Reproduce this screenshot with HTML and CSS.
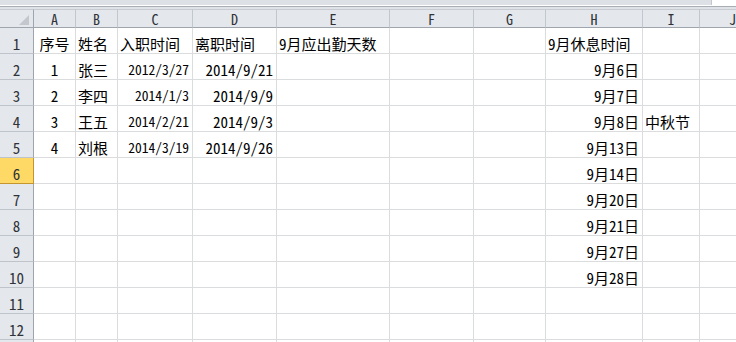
FILE: index.html
```html
<!DOCTYPE html>
<html lang="zh">
<head>
<meta charset="utf-8">
<title>Sheet</title>
<link rel="stylesheet" href="styles.css">
</head>
<body>
<div class="topbar">
  <div class="fbar"><div class="fbar-main"></div><div class="fbar-end"></div></div>
  <div class="fline-w"></div>
  <div class="fline-d"></div>
  <div class="fgap"></div>
</div>
<div class="grid">
  <div class="ch corner"><span class="tri"></span></div>
  <div class="ch">A</div><div class="ch">B</div><div class="ch">C</div><div class="ch">D</div><div class="ch">E</div><div class="ch">F</div><div class="ch">G</div><div class="ch">H</div><div class="ch">I</div><div class="ch">J</div>

  <div class="rh">1</div>
  <div class="c ctr">序号</div><div class="c">姓名</div><div class="c">入职时间</div><div class="c">离职时间</div><div class="c">9月应出勤天数</div><div class="c"></div><div class="c"></div><div class="c">9月休息时间</div><div class="c"></div><div class="c"></div>

  <div class="rh">2</div>
  <div class="c ctr">1</div><div class="c">张三</div><div class="c r sm">2012/3/27</div><div class="c r">2014/9/21</div><div class="c"></div><div class="c"></div><div class="c"></div><div class="c r">9月6日</div><div class="c"></div><div class="c"></div>

  <div class="rh">3</div>
  <div class="c ctr">2</div><div class="c">李四</div><div class="c r sm">2014/1/3</div><div class="c r">2014/9/9</div><div class="c"></div><div class="c"></div><div class="c"></div><div class="c r">9月7日</div><div class="c"></div><div class="c"></div>

  <div class="rh">4</div>
  <div class="c ctr">3</div><div class="c">王五</div><div class="c r sm">2014/2/21</div><div class="c r">2014/9/3</div><div class="c"></div><div class="c"></div><div class="c"></div><div class="c r">9月8日</div><div class="c">中秋节</div><div class="c"></div>

  <div class="rh">5</div>
  <div class="c ctr">4</div><div class="c">刘根</div><div class="c r sm">2014/3/19</div><div class="c r">2014/9/26</div><div class="c"></div><div class="c"></div><div class="c"></div><div class="c r">9月13日</div><div class="c"></div><div class="c"></div>

  <div class="rh sel">6</div>
  <div class="c"></div><div class="c"></div><div class="c"></div><div class="c"></div><div class="c"></div><div class="c"></div><div class="c"></div><div class="c r">9月14日</div><div class="c"></div><div class="c"></div>

  <div class="rh">7</div>
  <div class="c"></div><div class="c"></div><div class="c"></div><div class="c"></div><div class="c"></div><div class="c"></div><div class="c"></div><div class="c r">9月20日</div><div class="c"></div><div class="c"></div>

  <div class="rh">8</div>
  <div class="c"></div><div class="c"></div><div class="c"></div><div class="c"></div><div class="c"></div><div class="c"></div><div class="c"></div><div class="c r">9月21日</div><div class="c"></div><div class="c"></div>

  <div class="rh">9</div>
  <div class="c"></div><div class="c"></div><div class="c"></div><div class="c"></div><div class="c"></div><div class="c"></div><div class="c"></div><div class="c r">9月27日</div><div class="c"></div><div class="c"></div>

  <div class="rh">10</div>
  <div class="c"></div><div class="c"></div><div class="c"></div><div class="c"></div><div class="c"></div><div class="c"></div><div class="c"></div><div class="c r">9月28日</div><div class="c"></div><div class="c"></div>

  <div class="rh">11</div>
  <div class="c"></div><div class="c"></div><div class="c"></div><div class="c"></div><div class="c"></div><div class="c"></div><div class="c"></div><div class="c"></div><div class="c"></div><div class="c"></div>

  <div class="rh">12</div>
  <div class="c"></div><div class="c"></div><div class="c"></div><div class="c"></div><div class="c"></div><div class="c"></div><div class="c"></div><div class="c"></div><div class="c"></div><div class="c"></div>

  <div class="rh"></div>
  <div class="c"></div><div class="c"></div><div class="c"></div><div class="c"></div><div class="c"></div><div class="c"></div><div class="c"></div><div class="c"></div><div class="c"></div><div class="c"></div>
</div>
</body>
</html>
```

FILE: styles.css
```css
html, body {
  margin: 0;
  padding: 0;
  background: #ffffff;
  width: 736px;
  height: 342px;
  overflow: hidden;
}

body {
  font-family: "Noto Sans Mono CJK SC", "Noto Sans CJK SC", "Liberation Mono", monospace;
  font-size: 15px;
  color: #000;
}

.topbar {
  height: 9px;
  display: flex;
  flex-direction: column;
}

.fbar {
  height: 5px;
  display: flex;
}

.fbar-main {
  flex: 1;
  background: #dde1e6;
}

.fbar-end {
  width: 24px;
  background: #ffffff;
  border-left: 1px solid #c3c8ce;
}

.fline-w {
  height: 1px;
  background: #ffffff;
}

.fline-d {
  height: 1px;
  background: #a9aeb4;
}

.fgap {
  height: 2px;
  background: #dfe3e8;
}

.grid {
  display: grid;
  grid-template-columns: 34px 42px 42px 75px 84px 113px 84px 72px 97px 57px 66px;
  grid-template-rows: 19px repeat(13, 26px);
  width: 766px;
}

.grid > div {
  box-sizing: border-box;
  overflow: visible;
  white-space: nowrap;
}

.ch {
  background: #e4e7ec;
  border-top: 1px solid #c8ccd2;
  border-right: 1px solid #c2c7cd;
  border-bottom: 1px solid #9fa5ac;
  display: flex;
  align-items: center;
  justify-content: center;
  font-size: 14px;
  line-height: 14px;
  color: #2f3338;
  padding-top: 1px;
}

.corner {
  position: relative;
  border-right: 1px solid #9fa5ac;
}

.tri {
  position: absolute;
  right: 4px;
  bottom: 2px;
  width: 0;
  height: 0;
  border-left: 10px solid transparent;
  border-bottom: 10px solid #c4c8ce;
}

.rh {
  background: #e4e7ec;
  border-right: 1px solid #9fa5ac;
  border-bottom: 1px solid #bfc4ca;
  display: flex;
  align-items: flex-end;
  justify-content: center;
  font-size: 15px;
  line-height: 15px;
  padding-bottom: 2px;
  color: #2f3338;
}

.rh.sel {
  background: #ffd966;
  border-right: 1px solid #c5952e;
  border-bottom: 1px solid #c5952e;
}

.c {
  border-right: 1px solid #dadcdd;
  border-bottom: 1px solid #dadcdd;
  display: flex;
  align-items: flex-end;
  justify-content: flex-start;
  padding: 0 2px 2px 2px;
  line-height: 15px;
}

.c.r {
  justify-content: flex-end;
  padding-right: 3px;
}

.c.ctr {
  justify-content: center;
}

.c.sm {
  font-size: 13.5px;
}
```
